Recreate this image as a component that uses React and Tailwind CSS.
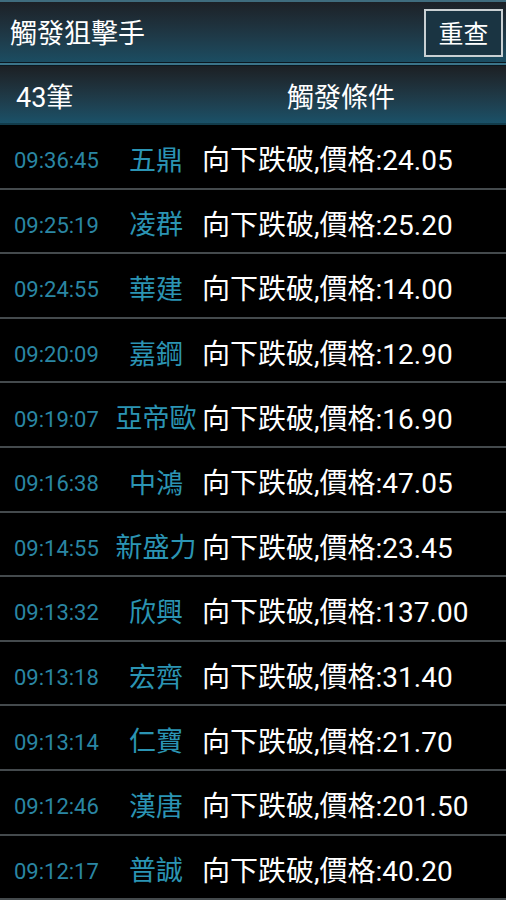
const rows = [
  ['09:36:45', '五鼎', '24.05'],
  ['09:25:19', '凌群', '25.20'],
  ['09:24:55', '華建', '14.00'],
  ['09:20:09', '嘉鋼', '12.90'],
  ['09:19:07', '亞帝歐', '16.90'],
  ['09:16:38', '中鴻', '47.05'],
  ['09:14:55', '新盛力', '23.45'],
  ['09:13:32', '欣興', '137.00'],
  ['09:13:18', '宏齊', '31.40'],
  ['09:13:14', '仁寶', '21.70'],
  ['09:12:46', '漢唐', '201.50'],
  ['09:12:17', '普誠', '40.20'],
];

const font = { fontFamily: 'Roboto, "Noto Sans CJK TC", sans-serif' };

export default function App() {
  return (
    <div className="w-[506px] h-[900px] overflow-hidden bg-black" style={font}>
      {/* title bar */}
      <div className="h-[62px] border-t-2 border-[#3f6c7e] bg-gradient-to-b from-[#1c2127] to-[#1b4d62] flex items-center justify-between pl-[10px] pr-[3px]">
        <span className="pt-[4px] text-white text-[27px] leading-none">觸發狙擊手</span>
        <button className="w-[79px] h-[48px] mt-[2px] border-2 border-[#c9d0d3] bg-[#1a3442] text-white text-[25px] leading-none flex items-center justify-center pt-[3px]">
          重查
        </button>
      </div>
      <div className="h-[1px] bg-[#0b1820]" />
      <div className="h-[2px] bg-[#3b7489]" />
      <div className="h-[1px] bg-[#0b1820]" />

      {/* column header */}
      <div className="h-[59px] pt-[7px] border-b-2 border-[#123b4a] bg-gradient-to-b from-[#1c2024] to-[#1a5168] flex items-center">
        <span className="w-[287px] pl-[16px] text-white text-[27px] leading-none">43筆</span>
        <span className="text-white text-[27px] leading-none">觸發條件</span>
      </div>

      {/* list */}
      <div className="flex flex-col">
        {rows.map(([time, name, price]) => (
          <div
            key={time + name}
            className="h-[64.6px] shrink-0 pt-[10px] border-b-2 border-[#444a4d] flex items-center"
          >
            <span className="w-[113px] pl-[14px] text-[#2a86a3] text-[22px] leading-none">{time}</span>
            <span className="w-[86px] text-center text-[#2b94b3] text-[27px] leading-none whitespace-nowrap">{name}</span>
            <span className="ml-[3px] text-white text-[28px] leading-none whitespace-nowrap">
              向下跌破,價格:{price}
            </span>
          </div>
        ))}
      </div>
    </div>
  );
}
